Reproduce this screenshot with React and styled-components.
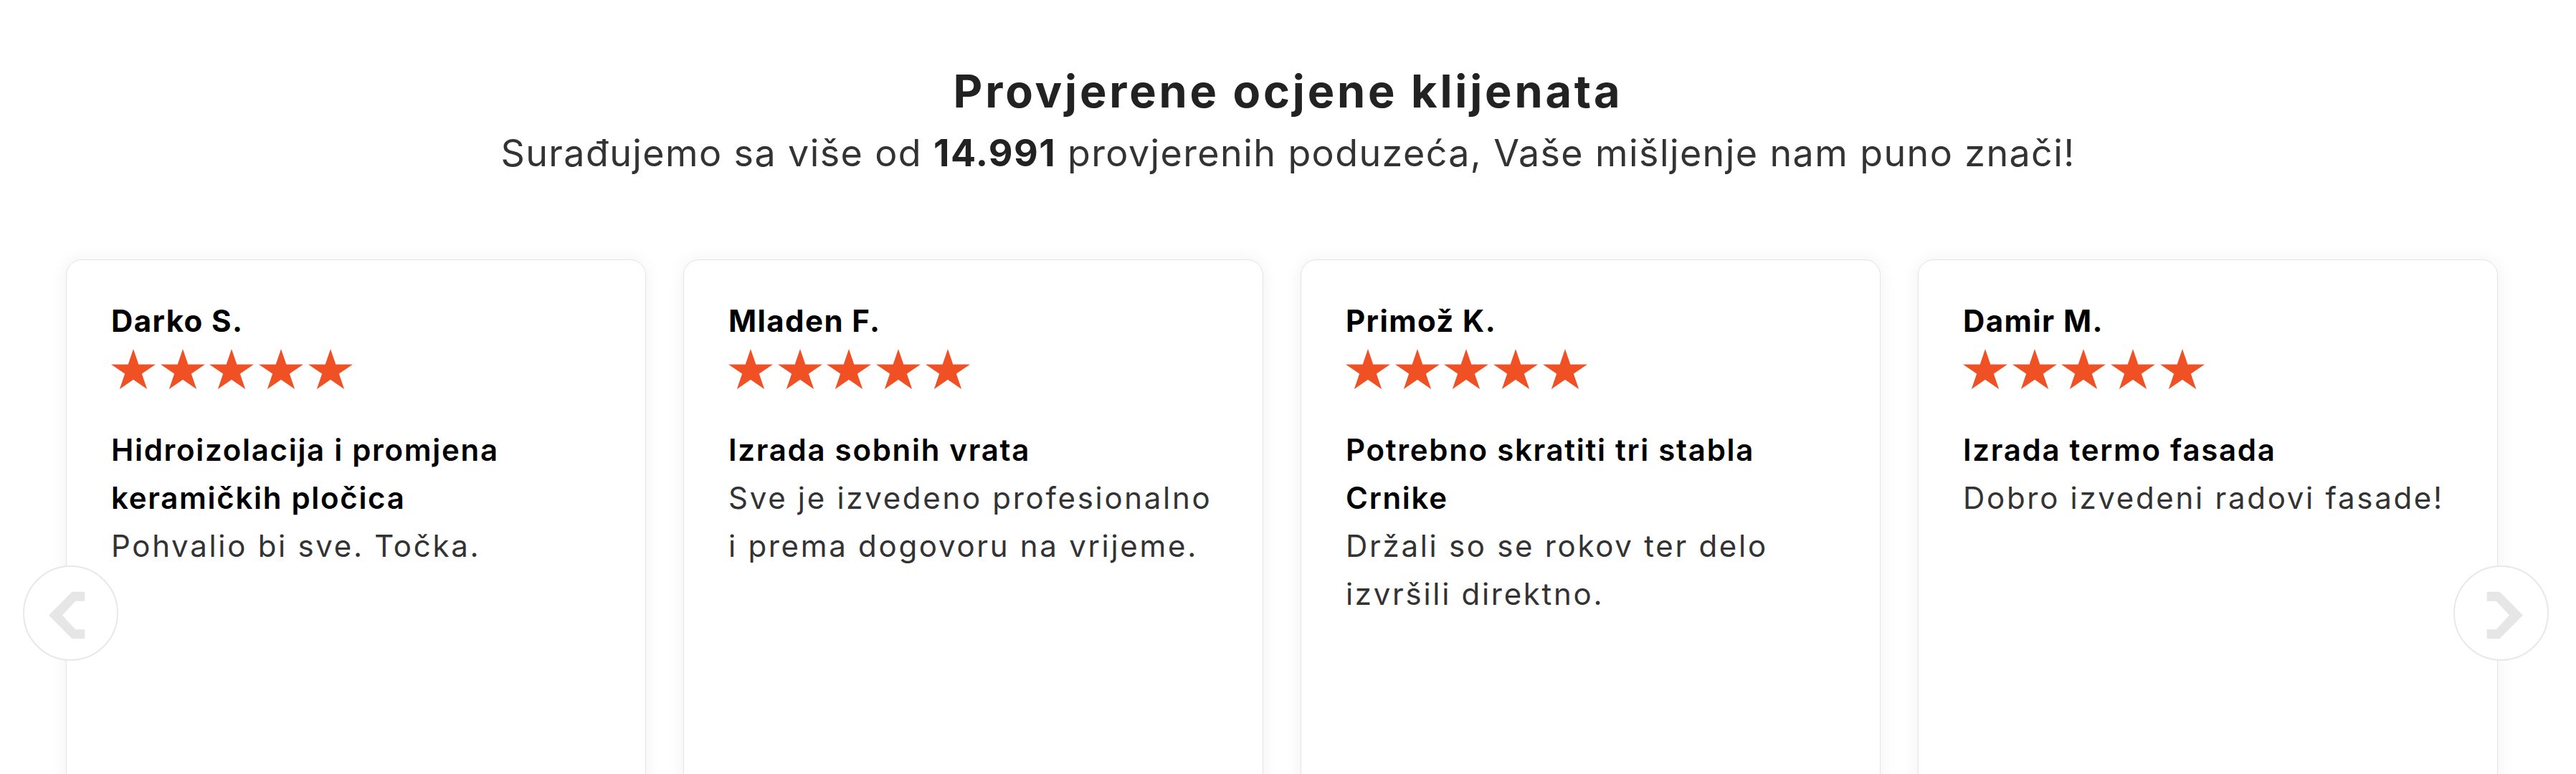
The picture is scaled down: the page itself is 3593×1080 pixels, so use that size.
import React from "react";
import styled, { createGlobalStyle } from "styled-components";

const Global = createGlobalStyle`
  html, body {
    margin: 0;
    padding: 0;
    background: #ffffff;
    overflow: hidden;
  }
  body {
    font-family: Inter, "Open Sans", "DejaVu Sans", sans-serif;
  }
`;

const Section = styled.section`
  padding-top: 90px;
  text-align: center;
`;

const Title = styled.h2`
  margin: 0;
  font-size: 63px;
  line-height: 75px;
  font-weight: 700;
  letter-spacing: 3.8px;
  color: #222222;
`;

const Subtitle = styled.p`
  margin: 18px 0 0;
  font-size: 52px;
  line-height: 62px;
  font-weight: 400;
  letter-spacing: 1.4px;
  color: #333333;

  strong {
    font-weight: 700;
    color: #222222;
  }
`;

const Carousel = styled.div`
  position: relative;
  margin-top: 117px;
  text-align: left;
`;

const Track = styled.div`
  display: flex;
  gap: 52px;
  padding-left: 92px;
`;

const Card = styled.article`
  flex: 0 0 809px;
  height: 800px;
  box-sizing: border-box;
  border: 1px solid #e4e4e4;
  border-radius: 22px;
  background: #ffffff;
  box-shadow: 0 0 26px rgba(0, 0, 0, 0.06);
  padding: 51px 69px 0 62px;
`;

const Name = styled.div`
  font-size: 42px;
  line-height: 67px;
  font-weight: 700;
  letter-spacing: 1.4px;
  color: #000000;
`;

const Stars = styled.div`
  display: flex;
  gap: 6.7px;
  margin-top: 6px;

  svg {
    display: block;
  }
`;

const Headline = styled.div`
  margin-top: 51px;
  font-size: 42px;
  line-height: 67px;
  font-weight: 600;
  letter-spacing: 1.7px;
  color: #000000;
`;

const Body = styled.div`
  font-size: 42px;
  line-height: 67px;
  font-weight: 400;
  letter-spacing: 2.7px;
  color: #333333;
`;

const ArrowButton = styled.button`
  position: absolute;
  top: 427px;
  ${(p) => (p.$side === "left" ? "left: 32px;" : "right: 38px;")}
  width: 133px;
  height: 133px;
  padding: 0;
  border: 2px solid #e8e8e8;
  border-radius: 50%;
  background: #ffffff;
  display: flex;
  align-items: center;
  justify-content: center;
  cursor: pointer;

  svg {
    display: block;
    transform: ${(p) => (p.$side === "right" ? "scaleX(-1)" : "none")};
  }
`;

const STAR_W = 62;
const STAR_H = 56;

function starPoints() {
  const pts = [];
  const R = 1;
  const r = 0.382;
  for (let i = 0; i < 10; i++) {
    const a = (-90 + i * 36) * (Math.PI / 180);
    const rad = i % 2 === 0 ? R : r;
    pts.push([Math.cos(a) * rad, Math.sin(a) * rad]);
  }
  const minX = -0.951, maxX = 0.951, minY = -1, maxY = 0.809;
  return pts
    .map(([x, y]) => {
      const px = ((x - minX) / (maxX - minX)) * STAR_W;
      const py = ((y - minY) / (maxY - minY)) * STAR_H;
      return `${px.toFixed(2)},${py.toFixed(2)}`;
    })
    .join(" ");
}

const STAR_POINTS = starPoints();

function Star() {
  return (
    <svg width={STAR_W} height={STAR_H} viewBox={`0 0 ${STAR_W} ${STAR_H}`}>
      <polygon points={STAR_POINTS} fill="#F05124" />
    </svg>
  );
}

function Chevron() {
  return (
    <svg width="133" height="133" viewBox="0 0 398 398">
      <polygon
        points="260,107 205,107 105,208 205,309 260,309 260,269 220,269 163,208 220,147 260,147"
        fill="#e6e6e6"
      />
    </svg>
  );
}

const reviews = [
  {
    name: "Darko S.",
    title: "Hidroizolacija i promjena keramičkih pločica",
    text: "Pohvalio bi sve. Točka.",
  },
  {
    name: "Mladen F.",
    title: "Izrada sobnih vrata",
    text: "Sve je izvedeno profesionalno i prema dogovoru na vrijeme.",
  },
  {
    name: "Primož K.",
    title: "Potrebno skratiti tri stabla Crnike",
    text: "Držali so se rokov ter delo izvršili direktno.",
  },
  {
    name: "Damir M.",
    title: "Izrada termo fasada",
    text: "Dobro izvedeni radovi fasade!",
  },
];

export default function App() {
  return (
    <>
      <Global />
      <Section>
        <Title>Provjerene ocjene klijenata</Title>
        <Subtitle>
          Surađujemo sa više od <strong>14.991</strong> provjerenih poduzeća, Vaše mišljenje nam puno znači!
        </Subtitle>
        <Carousel>
          <Track>
            {reviews.map((r) => (
              <Card key={r.name}>
                <Name>{r.name}</Name>
                <Stars>
                  {[0, 1, 2, 3, 4].map((i) => (
                    <Star key={i} />
                  ))}
                </Stars>
                <Headline>{r.title}</Headline>
                <Body>{r.text}</Body>
              </Card>
            ))}
          </Track>
          <ArrowButton $side="left" aria-label="Prethodno">
            <Chevron />
          </ArrowButton>
          <ArrowButton $side="right" aria-label="Sljedeće">
            <Chevron />
          </ArrowButton>
        </Carousel>
      </Section>
    </>
  );
}
